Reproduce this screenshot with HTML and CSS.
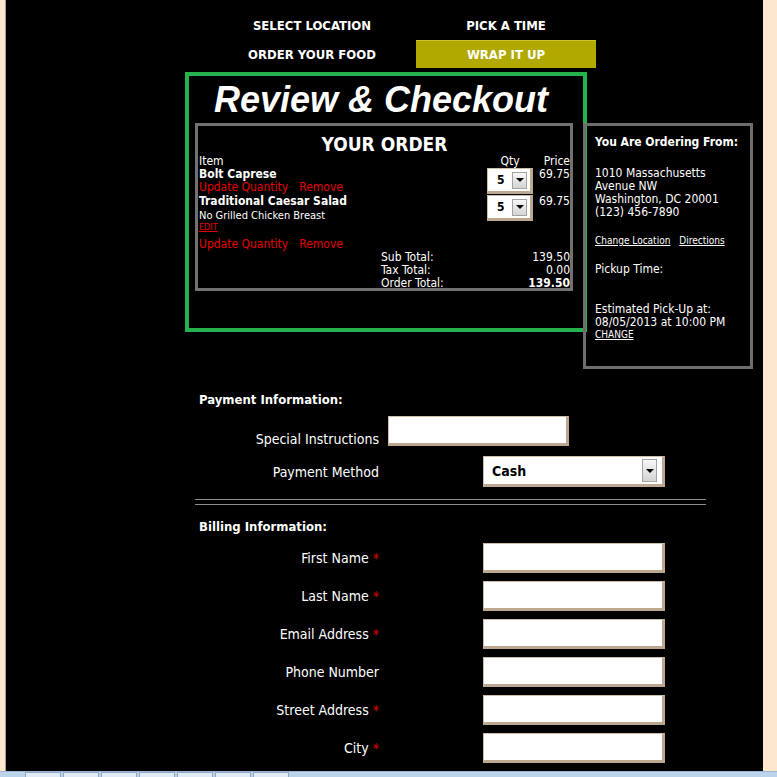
FILE: index.html
```html
<!DOCTYPE html>
<html lang="en">
<head>
  <meta charset="UTF-8" />
  <title>Review &amp; Checkout</title>
  <link rel="stylesheet" href="styles.css">
</head>
<body>

  <div class="page">

    <!-- order steps -->
    <div class="steps">
      <a class="step" href="#">SELECT LOCATION</a>
      <a class="step" href="#">PICK A TIME</a>
      <a class="step" href="#">ORDER YOUR FOOD</a>
      <a class="step active" href="#">WRAP IT UP</a>
    </div>

    <div class="checkout-row">
      <div class="review">
        <h1>Review &amp; Checkout</h1>

        <div class="order">
          <h2>YOUR ORDER</h2>
          <div class="order-head">
            <span>Item</span>
            <span class="qty-head">Qty</span>
            <span class="price">Price</span>
          </div>

          <div class="item">
            <div class="item-name">Bolt Caprese</div>
            <div class="qty">
              <div class="select small"><span>5</span><i class="arrow"></i></div>
            </div>
            <div class="price">69.75</div>
            <div class="item-actions"><a href="#">Update Quantity</a><a href="#">Remove</a></div>
          </div>

          <div class="item second">
            <div class="item-name">Traditional Caesar Salad</div>
            <div class="qty">
              <div class="select small"><span>5</span><i class="arrow"></i></div>
            </div>
            <div class="price">69.75</div>
            <div class="item-note">No Grilled Chicken Breast</div>
            <div class="item-edit"><a href="#">EDIT</a></div>
            <div class="item-actions spaced"><a href="#">Update Quantity</a><a href="#">Remove</a></div>
          </div>

          <div class="totals">
            <span>Sub Total:</span><span>139.50</span>
            <span>Tax Total:</span><span>0.00</span>
            <span>Order Total:</span><span class="strong">139.50</span>
          </div>
        </div>
      </div>

      <div class="location">
        <div class="strong">You Are Ordering From:</div>
        <div class="address">
          1010 Massachusetts<br>
          Avenue NW<br>
          Washington, DC 20001<br>
          (123) 456-7890
        </div>
        <div class="small-links"><a href="#">Change Location</a><a href="#">Directions</a></div>
        <div class="pickup">Pickup Time:</div>
        <div class="estimate">
          Estimated Pick-Up at:<br>
          08/05/2013 at 10:00 PM
        </div>
        <div class="small-links"><a href="#">CHANGE</a></div>
      </div>
    </div>

    <div class="form-section">
      <div class="section-title">Payment Information:</div>

      <div class="field special">
        <label>Special Instructions</label>
        <input type="text" class="text-input narrow">
      </div>

      <div class="field payment">
        <label>Payment Method</label>
        <div class="select wide"><span>Cash</span><i class="arrow"></i></div>
      </div>

      <div class="separator"></div>

      <div class="section-title billing">Billing Information:</div>

      <div class="field first">
        <label>First Name <span class="req">*</span></label>
        <input type="text" class="text-input">
      </div>
      <div class="field">
        <label>Last Name <span class="req">*</span></label>
        <input type="text" class="text-input">
      </div>
      <div class="field">
        <label>Email Address <span class="req">*</span></label>
        <input type="text" class="text-input">
      </div>
      <div class="field">
        <label>Phone Number</label>
        <input type="text" class="text-input">
      </div>
      <div class="field">
        <label>Street Address <span class="req">*</span></label>
        <input type="text" class="text-input">
      </div>
      <div class="field">
        <label>City <span class="req">*</span></label>
        <input type="text" class="text-input">
      </div>
    </div>

  </div>

  <!-- window taskbar along the bottom -->
  <div class="taskbar">
    <span class="task"></span>
    <span class="task"></span>
    <span class="task"></span>
    <span class="task"></span>
    <span class="task"></span>
    <span class="task"></span>
    <span class="task"></span>
  </div>

</body>
</html>
```

FILE: styles.css
```css
* {
  box-sizing: border-box;
}

html,
body {
  margin: 0;
}

body {
  background-color: #fde7cf;
  font-family: "DejaVu Sans Condensed", "DejaVu Sans", sans-serif;
  font-size: 12px;
  color: #fff;
}

a {
  color: inherit;
}

.page {
  margin-left: 5px;
  width: 758px;
  min-height: 1100px;
  background-color: #000;
  border-left: 1px solid #a7a39c;
  padding-bottom: 40px;
}

/* steps */

.steps {
  display: grid;
  grid-template-columns: 180px 180px;
  grid-auto-rows: 28px;
  column-gap: 14px;
  row-gap: 1px;
  padding: 11px 0 0 216px;
}

.step {
  display: flex;
  align-items: center;
  justify-content: center;
  font-size: 13px;
  font-weight: bold;
  color: #fff;
  text-decoration: none;
}

.step.active {
  background-color: #b1a900;
  border-top: 1px solid #c9c233;
}

/* review box */

.checkout-row {
  display: flex;
  align-items: flex-start;
  margin: 4px 0 0 179px;
}

.review {
  width: 402px;
  height: 260px;
  border: 4px solid #25b14b;
}

.review h1 {
  margin: 0;
  padding-left: 25px;
  font-family: "Liberation Sans", Arial, sans-serif;
  font-size: 36px;
  font-style: italic;
  font-weight: bold;
  line-height: 48px;
}

.order {
  width: 378px;
  height: 168px;
  margin: -1px 0 0 6px;
  padding-left: 1px;
  border: 3px solid #717171;
  line-height: 13px;
}

.order h2 {
  margin: 0;
  padding-top: 7px;
  font-size: 19px;
  line-height: 22px;
  text-align: center;
}

.order-head,
.item {
  display: grid;
  grid-template-columns: 1fr 52px 34px;
}

.qty-head {
  text-align: center;
}

.price {
  text-align: right;
}

.item-name {
  font-weight: bold;
}

.item .qty {
  grid-column: 2;
  grid-row: 1 / span 3;
  padding-left: 3px;
}

.item .price {
  grid-column: 3;
  grid-row: 1;
}

.item > .item-note,
.item > .item-edit,
.item > .item-actions {
  grid-column: 1;
}

.item.second {
  margin-top: 1px;
}

.item-actions a {
  color: #e60000;
  text-decoration: none;
  margin-right: 11px;
}

.item-actions.spaced {
  margin-top: 6px;
}

.item-note {
  margin-top: 1px;
  font-size: 11px;
}

.item-edit {
  font-size: 9px;
  line-height: 10px;
}

.item-edit a {
  color: #e60000;
}

.totals {
  display: grid;
  grid-template-columns: 1fr auto;
  padding-left: 182px;
  font-size: 12px;
  line-height: 13px;
}

.totals span:nth-child(even) {
  text-align: right;
}

.strong {
  font-weight: bold;
}

/* location box */

.location {
  width: 170px;
  height: 246px;
  margin: 51px 0 0 -4px;
  padding: 10px 0 0 9px;
  border: 3px solid #6e6e6e;
  line-height: 13px;
}

.address {
  margin-top: 18px;
}

.small-links {
  margin-top: 15px;
  font-size: 10px;
}

.small-links a {
  margin-right: 9px;
}

.pickup {
  margin-top: 16px;
}

.estimate {
  margin-top: 27px;
}

.estimate + .small-links {
  margin-top: -1px;
}

/* selects and inputs */

.select {
  display: flex;
  align-items: center;
  justify-content: space-between;
  background-color: #fff;
  color: #000;
  font-weight: bold;
  border-style: solid;
  border-width: 1px 3px 3px 1px;
  border-color: #cdbda8 #bca890 #bca890 #cdbda8;
}

.select.small {
  width: 46px;
  height: 26px;
  padding: 0 3px 0 9px;
}

.select.wide {
  width: 182px;
  height: 31px;
  padding: 0 5px 0 8px;
  font-size: 14px;
}

.arrow {
  display: flex;
  align-items: center;
  justify-content: center;
  width: 15px;
  height: 17px;
  border: 1px solid #a3a3a3;
  background: linear-gradient(#f7f7f7, #d4d4d4);
}

.select.wide .arrow {
  height: 23px;
}

.arrow::after {
  content: "";
  border-top: 4px solid #000;
  border-left: 4px solid transparent;
  border-right: 4px solid transparent;
}

.text-input {
  width: 182px;
  height: 30px;
  margin: 0 0 0 104px;
  background-color: #fff;
  border-style: solid;
  border-width: 1px 3px 3px 1px;
  border-color: #cdbda8 #bca890 #bca890 #cdbda8;
}

.text-input.narrow {
  width: 181px;
  margin-left: 9px;
}

/* form */

.form-section {
  margin-left: 189px;
}

.section-title {
  margin-top: 24px;
  padding-left: 4px;
  font-size: 13px;
  font-weight: bold;
  line-height: 13px;
}

.section-title.billing {
  margin-top: 15px;
}

.field {
  display: flex;
  align-items: center;
  margin-top: 8px;
}

.field label {
  width: 184px;
  font-size: 14px;
  line-height: 14px;
  text-align: right;
}

.field.special {
  align-items: flex-end;
  margin-top: 10px;
}

.field.payment {
  margin-top: 10px;
}

.field.payment .select {
  margin-left: 104px;
}

.field.first {
  margin-top: 10px;
}

.req {
  color: #e60000;
}

.separator {
  width: 511px;
  height: 6px;
  margin-top: 12px;
  border-top: 1px solid #8c8c8c;
  border-bottom: 1px solid #8c8c8c;
}

/* taskbar */

.taskbar {
  position: fixed;
  left: 0;
  right: 0;
  bottom: 0;
  height: 6px;
  display: flex;
  gap: 2px;
  padding-left: 25px;
  background-color: #bcd3ec;
  border-top: 1px solid #9db5d0;
}

.task {
  width: 36px;
  background-color: #e1ebf6;
  border: 1px solid #8fa7c3;
  border-bottom: none;
}
```
